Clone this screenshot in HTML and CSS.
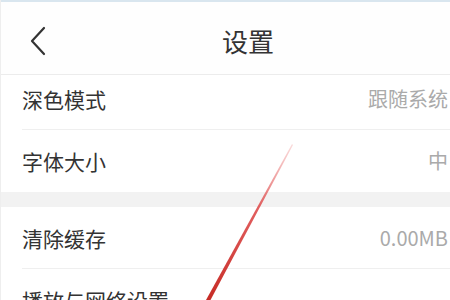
FILE: index.html
```html
<!DOCTYPE html>
<html lang="zh-CN">
<head>
<meta charset="utf-8">
<title>设置</title>
<link rel="stylesheet" href="styles.css">
</head>
<body>
<div class="screen">
  <div class="topstrip"></div>
  <header class="header">
    <div class="back">
      <svg width="18" height="30" viewBox="0 0 18 30"><path d="M15 2 L3 15 L15 28" fill="none" stroke="#333" stroke-width="2.2" stroke-linecap="round" stroke-linejoin="round"/></svg>
    </div>
    <h1 class="title">设置</h1>
  </header>
  <section class="group">
    <div class="row row-first"><span class="label">深色模式</span><span class="value">跟随系统</span></div>
    <div class="row"><span class="label">字体大小</span><span class="value">中</span></div>
  </section>
  <div class="gap"></div>
  <section class="group">
    <div class="row"><span class="label">清除缓存</span><span class="value">0.00MB</span></div>
    <div class="row"><span class="label">播放与网络设置</span><span class="value"></span></div>
  </section>
  <svg class="annot" width="450" height="300" viewBox="0 0 450 300">
    <defs>
      <linearGradient id="g" x1="0" y1="0" x2="0" y2="1">
        <stop offset="0" stop-color="#e88" stop-opacity="0.3"/>
        <stop offset="0.4" stop-color="#d44" stop-opacity="0.85"/>
        <stop offset="1" stop-color="#c62b25"/>
      </linearGradient>
    </defs>
    <polygon points="291,144 292,145 209.5,300 205,300" fill="url(#g)"/>
  </svg>
</div>
</body>
</html>
```
FILE: styles.css
```css
html, body {
  margin: 0;
  padding: 0;
}
body {
  width: 450px;
  height: 300px;
  overflow: hidden;
  background: #f2f2f2;
  font-family: "Noto Sans CJK SC", "Noto Sans", sans-serif;
  color: #333;
}
.screen {
  position: relative;
  width: 450px;
  height: 300px;
  overflow: hidden;
  border-left: 1px solid #eeeeee;
  box-sizing: border-box;
}
.topstrip {
  height: 2px;
  background: #d9e6ef;
}
.header {
  height: 73px;
  box-sizing: border-box;
  padding-top: 6px;
  background: #fefefe;
  border-bottom: 1px solid #ececec;
  display: flex;
  align-items: center;
}
.back {
  padding-left: 28px;
  width: 18px;
  display: flex;
  align-items: center;
}
.back svg {
  display: block;
}
.title {
  margin: 0 0 0 175px;
  font-size: 26px;
  font-weight: 400;
  line-height: 30px;
  color: #333;
}
.group {
  background: #fff;
}
.row {
  height: 62px;
  box-sizing: border-box;
  margin-left: 21px;
  padding-right: 2px;
  display: flex;
  align-items: center;
  justify-content: space-between;
  border-bottom: 1px solid #efefef;
}
.row:last-child {
  border-bottom: none;
}
.row-first {
  height: 55px;
  padding-bottom: 6px;
}
.label {
  font-size: 21px;
  line-height: 30px;
  color: #333;
}
.value {
  font-size: 20px;
  line-height: 30px;
  color: #aaa;
}
.gap {
  height: 15px;
  background: #f2f2f2;
}
.annot {
  position: absolute;
  left: 0;
  top: 0;
  pointer-events: none;
}
```
